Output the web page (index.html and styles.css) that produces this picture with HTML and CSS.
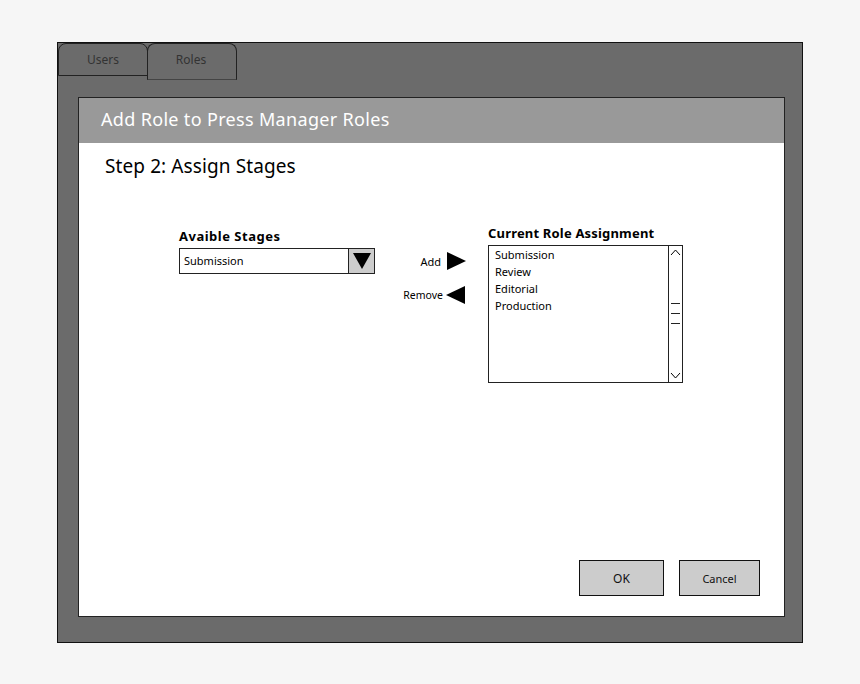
FILE: index.html
```html
<!DOCTYPE html>
<html lang="en">
<head>
  <meta charset="UTF-8">
  <title>Add Role</title>
  <link rel="stylesheet" href="styles.css">
</head>
<body>
  <div class="frame">
    <div class="tabs">
      <div class="tab">Users</div>
      <div class="tab active">Roles</div>
    </div>
    <div class="panel">
      <div class="panel-title">Add Role to Press Manager Roles</div>
      <div class="panel-body">
        <h2 class="step">Step 2: Assign Stages</h2>
        <div class="assign">
          <div class="available">
            <div class="label">Avaible Stages</div>
            <div class="select">
              <span class="select-value">Submission</span>
              <span class="select-btn">
                <svg width="18" height="16" viewBox="0 0 18 16"><path d="M0 0H18L9 16Z" fill="#000"/></svg>
              </span>
            </div>
          </div>
          <div class="moves">
            <div class="move">
              <span>Add</span>
              <svg width="19" height="18" viewBox="0 0 19 18"><path d="M0 0L19 9L0 18Z" fill="#000"/></svg>
            </div>
            <div class="move move-remove">
              <span>Remove</span>
              <svg width="19" height="18" viewBox="0 0 19 18"><path d="M19 0L0 9L19 18Z" fill="#000"/></svg>
            </div>
          </div>
          <div class="current">
            <div class="label">Current Role Assignment</div>
            <div class="listbox">
              <ul class="list">
                <li>Submission</li>
                <li>Review</li>
                <li>Editorial</li>
                <li>Production</li>
              </ul>
              <div class="scrollbar">
                <svg width="11" height="7" viewBox="0 0 11 7"><path d="M1 6L5.5 1L10 6" fill="none" stroke="#000"/></svg>
                <div class="grip"><i></i><i></i><i></i></div>
                <svg width="11" height="7" viewBox="0 0 11 7"><path d="M1 1L5.5 6L10 1" fill="none" stroke="#000"/></svg>
              </div>
            </div>
          </div>
        </div>
        <div class="actions">
          <button class="btn btn-ok">OK</button>
          <button class="btn btn-cancel">Cancel</button>
        </div>
      </div>
    </div>
  </div>
</body>
</html>
```

FILE: styles.css
```css
* {
  margin: 0;
  padding: 0;
  box-sizing: border-box;
  font-family: "Comic Sans MS", "Noto Sans", sans-serif;
}

body {
  background: #f6f6f6;
  padding: 42px 57px 41px;
  color: #000;
}

.frame {
  width: 746px;
  height: 601px;
  background: #6b6b6b;
  border: 1px solid #111;
  display: flex;
  flex-direction: column;
}

.tabs {
  display: flex;
  align-items: flex-start;
  height: 37px;
}

.tab {
  width: 90px;
  height: 33px;
  border: 1px solid #222;
  border-radius: 8px 8px 0 0;
  font-size: 12px;
  color: #333;
  display: flex;
  align-items: center;
  justify-content: center;
}

.tab.active {
  height: 37px;
  border-bottom-color: #444;
  margin-left: -1px;
  padding-bottom: 4px;
  padding-right: 2px;
}

.panel {
  margin: 17px 17px 25px 20px;
  flex: 1;
  border: 1px solid #222;
  background: #fff;
  display: flex;
  flex-direction: column;
}

.panel-title {
  height: 45px;
  background: #999;
  color: #fff;
  font-size: 18px;
  letter-spacing: 0.33px;
  padding: 0 0 3px 22px;
  display: flex;
  align-items: center;
}

.panel-body {
  flex: 1;
  display: flex;
  flex-direction: column;
  padding: 9px 24px 20px 26px;
}

.step {
  font-size: 19px;
  font-weight: 400;
  letter-spacing: 0.1px;
  line-height: 28px;
}

.assign {
  display: flex;
  align-items: flex-start;
  margin: 44px 0 0 74px;
}

.label {
  font-size: 13px;
  font-weight: 700;
  line-height: 18px;
}

.available {
  width: 196px;
  padding-top: 3px;
}

.available .label {
  letter-spacing: 0.5px;
}

.current .label {
  letter-spacing: 0.18px;
}

.select {
  height: 26px;
  border: 1px solid #222;
  display: flex;
  margin-top: 3px;
}

.select-value {
  flex: 1;
  font-size: 11px;
  padding-left: 4px;
  line-height: 24px;
}

.select-btn {
  width: 26px;
  background: #ccc;
  border-left: 1px solid #222;
  display: flex;
  align-items: center;
  justify-content: center;
}

.moves {
  width: 113px;
  padding: 28px 22px 0 0;
  display: flex;
  flex-direction: column;
  align-items: flex-end;
  gap: 16px;
}

.move {
  display: flex;
  align-items: center;
  justify-content: flex-end;
  gap: 6px;
  height: 18px;
  font-size: 11px;
}

.move-remove {
  gap: 3px;
  margin-right: 1px;
  font-size: 10.5px;
}

.current {
  width: 195px;
}

.listbox {
  height: 138px;
  border: 1px solid #222;
  display: flex;
  margin-top: 3px;
}

.list {
  flex: 1;
  list-style: none;
  font-size: 11px;
  line-height: 17px;
  padding-left: 6px;
}

.scrollbar {
  width: 14px;
  border-left: 1px solid #222;
  display: flex;
  flex-direction: column;
  align-items: center;
  justify-content: space-between;
  padding: 3px 0;
}

.grip {
  display: flex;
  flex-direction: column;
  gap: 9px;
  margin-bottom: 2px;
}

.grip i {
  display: block;
  width: 9px;
  height: 1px;
  background: #222;
}

.actions {
  margin-top: auto;
  display: flex;
  justify-content: flex-end;
  gap: 15px;
}

.btn {
  height: 36px;
  background: #ccc;
  border: 1px solid #111;
  font-size: 12px;
  color: #111;
}

.btn-ok {
  width: 85px;
}

.btn-cancel {
  width: 81px;
  font-size: 11px;
}
```
